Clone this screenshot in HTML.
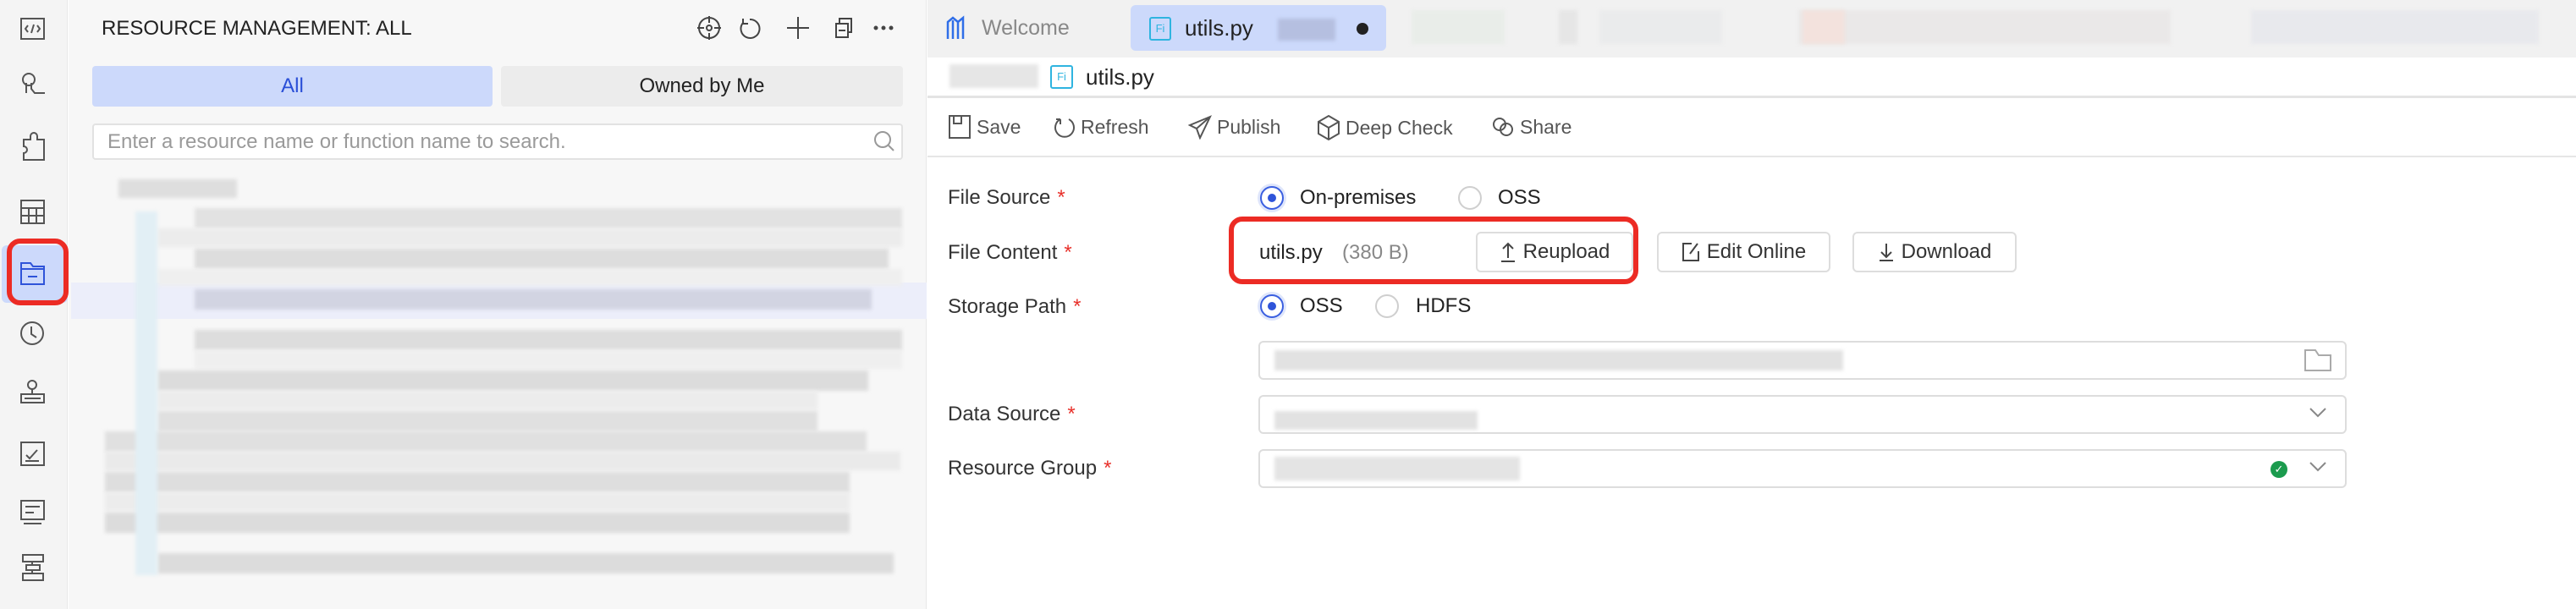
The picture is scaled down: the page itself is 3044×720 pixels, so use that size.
<!DOCTYPE html>
<html><head><meta charset="utf-8"><style>
*{margin:0;padding:0;box-sizing:border-box}
body{width:3044px;height:720px;overflow:hidden;background:#fff;font-family:"Liberation Sans",Arial,sans-serif;position:relative;color:#333}
.a{position:absolute}
.bl{position:absolute;background:#e4e4e4;filter:blur(2px)}
.lbl{position:absolute;left:1120px;font-size:24px;color:#333;line-height:30px}
.lbl b{color:#e8302a;font-weight:normal;margin-left:8px}
.radio{position:absolute;width:28px;height:28px;border-radius:50%;border:2px solid #cfcfcf;background:#fff}
.radio.on{border-color:#3a5fe0;box-shadow:0 0 0 3px #dfe6fb}
.radio.on::after{content:"";position:absolute;left:7px;top:7px;width:10px;height:10px;border-radius:50%;background:#2f54d9}
.rt{position:absolute;font-size:24px;color:#222;line-height:30px}
.btn{position:absolute;top:274px;height:48px;border:2px solid #ddd;border-radius:6px;font-size:24px;color:#333;display:flex;align-items:center;justify-content:center;gap:8px;background:#fff}
.inp{position:absolute;left:1487px;width:1286px;height:46px;border:2px solid #ddd;border-radius:6px;background:#fff}
.tb{position:absolute;top:135px;font-size:23px;color:#555;line-height:30px;display:flex;align-items:center;gap:6px}
svg{display:block}
</style></head><body>
<div class="a" style="left:0;top:0;width:80px;height:720px;background:#f4f4f4;border-right:1px solid #e8e8e8"></div>
<div class="a" style="left:2px;top:290px;width:78px;height:68px;background:#ccd9fb;border-radius:6px"></div>
<div class="a" style="left:8px;top:282px;width:73px;height:79px;border:6px solid #ec2b24;border-radius:16px"></div>
<svg class="a" style="left:0;top:0" width="80" height="720" fill="none" stroke="#555" stroke-width="2">
<rect x="25" y="22" width="27" height="24"/><path d="M33 30l-3 4 3 4M44 30l3 4-3 4M40 29l-3 10"/>
<circle cx="34" cy="94" r="7"/><path d="M31 98v12M37 98v7l4 5h12"/>
<path d="M28 165h8v-4a4 4 0 0 1 8 0v4h8v24H28v-8a4 4 0 0 0 0-8z"/>
<rect x="25" y="237" width="27" height="27"/><path d="M25 246h27M25 255h27M34 246v18M43 246v18"/>
<path d="M25 311h11l3 4h13v21H25z M25 318h27 M33 327h11" stroke="#2f54d9"/>
<circle cx="38" cy="394" r="13"/><path d="M37 386v9l6 4"/>
<circle cx="38" cy="455" r="5"/><path d="M38 460v6M25 466h27v10H25z M29 471h19"/>
<rect x="25" y="523" width="27" height="27"/><path d="M31 538l4 4 9-10M30 545h16"/>
<rect x="25" y="592" width="27" height="22"/><path d="M30 599h17M30 606h10M28 619h21"/>
<rect x="27" y="656" width="24" height="8"/><rect x="31" y="668" width="16" height="6"/><rect x="27" y="678" width="24" height="8"/><path d="M38 664v4M38 674v4"/>
</svg>
<div class="a" style="left:81px;top:0;width:1014px;height:720px;background:#f7f7f7;border-right:1px solid #e8e8e8"></div>
<div class="a" style="left:120px;top:20px;font-size:24px;color:#222;line-height:28px">RESOURCE MANAGEMENT: ALL</div>
<svg class="a" style="left:820px;top:14px" width="250" height="40" fill="none" stroke="#444" stroke-width="2">
<circle cx="18" cy="19" r="12"/><circle cx="18" cy="19" r="3"/><path d="M18 5v8M18 25v8M4 19h8M24 19h8"/>
<path d="M66 9a11 11 0 1 1-8 4M58 8v6h6"/>
<path d="M123 6v26M110 19h26"/>
<rect x="168" y="14" width="14" height="16"/><path d="M172 14v-6h14v16h-4M171 22h8"/>
<circle cx="215" cy="19" r="1.5" fill="#444"/><circle cx="224" cy="19" r="1.5" fill="#444"/><circle cx="233" cy="19" r="1.5" fill="#444"/>
</svg>
<div class="a" style="left:109px;top:78px;width:473px;height:48px;background:#ccd9fb;border-radius:4px;color:#2a4fd7;font-size:24px;line-height:48px;text-align:center">All</div>
<div class="a" style="left:592px;top:78px;width:475px;height:48px;background:#ececec;border-radius:4px;color:#222;font-size:24px;line-height:48px;text-align:center">Owned by Me</div>
<div class="a" style="left:109px;top:146px;width:958px;height:43px;background:#fff;border:2px solid #e2e2e2;border-radius:4px;font-size:24px;color:#9a9a9a;line-height:39px;padding-left:16px">Enter a resource name or function name to search.</div>
<svg class="a" style="left:1030px;top:152px" width="30" height="30" fill="none" stroke="#999" stroke-width="2"><circle cx="13" cy="13" r="9"/><path d="M20 20l6 6"/></svg>
<div class="a" style="left:84px;top:334px;width:1011px;height:43px;background:#eceefa"></div>
<div class="bl" style="left:140px;top:212px;width:140px;height:22px;background:#dedede"></div>
<div class="bl" style="left:230px;top:246px;width:836px;height:24px;background:#e2e2e2"></div>
<div class="bl" style="left:186px;top:270px;width:880px;height:22px;background:#ececec"></div>
<div class="bl" style="left:230px;top:294px;width:820px;height:24px;background:#dddddd"></div>
<div class="bl" style="left:186px;top:318px;width:880px;height:20px;background:#efefef"></div>
<div class="bl" style="left:230px;top:342px;width:800px;height:24px;background:#d2d4e2"></div>
<div class="bl" style="left:230px;top:390px;width:836px;height:24px;background:#dddddd"></div>
<div class="bl" style="left:230px;top:414px;width:836px;height:22px;background:#efefef"></div>
<div class="bl" style="left:186px;top:438px;width:840px;height:24px;background:#dcdcdc"></div>
<div class="bl" style="left:186px;top:462px;width:780px;height:22px;background:#ececec"></div>
<div class="bl" style="left:186px;top:486px;width:780px;height:24px;background:#e0e0e0"></div>
<div class="bl" style="left:124px;top:510px;width:900px;height:24px;background:#e0e0e0"></div>
<div class="bl" style="left:124px;top:534px;width:940px;height:22px;background:#eaeaea"></div>
<div class="bl" style="left:124px;top:558px;width:880px;height:24px;background:#dedede"></div>
<div class="bl" style="left:124px;top:582px;width:880px;height:22px;background:#ececec"></div>
<div class="bl" style="left:124px;top:606px;width:880px;height:24px;background:#dcdcdc"></div>
<div class="bl" style="left:186px;top:654px;width:870px;height:24px;background:#dcdcdc"></div>
<div class="a" style="left:160px;top:250px;width:26px;height:430px;background:#e2eff5;filter:blur(2px)"></div>
<div class="a" style="left:1096px;top:0;width:1948px;height:68px;background:#f1f1f1"></div>
<svg class="a" style="left:1116px;top:18px" width="28" height="30" fill="none" stroke="#2f6ee8" stroke-width="2.5"><path d="M4 28V8l6-5 6 5 6-5v25M10 6v22M16 8v20M22 6v18"/></svg>
<div class="a" style="left:1160px;top:18px;font-size:25px;color:#888;line-height:30px">Welcome</div>
<div class="a" style="left:1336px;top:6px;width:302px;height:54px;background:#ccd9fb;border-radius:6px"></div>
<div class="a" style="left:1358px;top:20px;width:26px;height:28px;border:2px solid #2fb4e0;border-radius:3px;font-size:13px;color:#2fb4e0;text-align:center;line-height:24px">Fi</div>
<div class="a" style="left:1400px;top:17px;font-size:26px;color:#222;line-height:32px">utils.py</div>
<div class="bl" style="left:1510px;top:22px;width:68px;height:26px;background:#b5bfe0"></div>
<div class="a" style="left:1603px;top:27px;width:14px;height:14px;border-radius:50%;background:#222"></div>
<div class="bl" style="left:1668px;top:12px;width:110px;height:40px;background:#e9ede9"></div>
<div class="bl" style="left:1842px;top:12px;width:22px;height:40px;background:#e6e6e6"></div>
<div class="bl" style="left:1890px;top:12px;width:145px;height:40px;background:#eaebec"></div>
<div class="bl" style="left:2125px;top:12px;width:440px;height:40px;background:#eae8e8"></div>
<div class="bl" style="left:2130px;top:12px;width:50px;height:40px;background:#f3e2dd"></div>
<div class="bl" style="left:2660px;top:12px;width:340px;height:40px;background:#e8e9ed"></div>
<div class="bl" style="left:1122px;top:76px;width:105px;height:28px;background:#e6e6e6"></div>
<div class="a" style="left:1241px;top:77px;width:27px;height:28px;border:2px solid #2fb4e0;border-radius:3px;font-size:13px;color:#2fb4e0;text-align:center;line-height:24px">Fi</div>
<div class="a" style="left:1283px;top:75px;font-size:26px;color:#222;line-height:32px">utils.py</div>
<div class="a" style="left:1096px;top:113px;width:1948px;height:3px;background:#e4e4e4"></div>
<div class="tb" style="left:1120px"><svg width="28" height="30" fill="none" stroke="#555" stroke-width="2"><path d="M2 2h24v26H2z M7 2v9h9V2" /></svg>Save</div>
<div class="tb" style="left:1245px"><svg width="26" height="30" fill="none" stroke="#555" stroke-width="2"><path d="M8 6a11 11 0 1 0 10 0M8 6v6M8 6H3"/></svg>Refresh</div>
<div class="tb" style="left:1404px"><svg width="28" height="30" fill="none" stroke="#555" stroke-width="2"><path d="M26 3L2 13l8 4 4 11zM10 17L26 3"/></svg>Publish</div>
<div class="tb" style="left:1556px"><svg width="28" height="32" fill="none" stroke="#555" stroke-width="2"><path d="M14 2l12 7v14l-12 7-12-7V9zM2 9l12 7 12-7M14 16v14"/></svg>Deep Check</div>
<div class="tb" style="left:1762px"><svg width="28" height="30" fill="none" stroke="#555" stroke-width="2"><circle cx="10" cy="12" r="7"/><circle cx="18" cy="18" r="7"/></svg>Share</div>
<div class="a" style="left:1096px;top:184px;width:1948px;height:2px;background:#e6e6e6"></div>
<div class="lbl" style="top:219px">File Source<b>*</b></div>
<div class="lbl" style="top:284px">File Content<b>*</b></div>
<div class="lbl" style="top:348px">Storage Path<b>*</b></div>
<div class="lbl" style="top:475px">Data Source<b>*</b></div>
<div class="lbl" style="top:539px">Resource Group<b>*</b></div>
<div class="radio on" style="left:1489px;top:220px"></div><div class="rt" style="left:1536px;top:219px">On-premises</div>
<div class="radio" style="left:1723px;top:220px"></div><div class="rt" style="left:1770px;top:219px">OSS</div>
<div class="radio on" style="left:1489px;top:348px"></div><div class="rt" style="left:1536px;top:347px">OSS</div>
<div class="radio" style="left:1625px;top:348px"></div><div class="rt" style="left:1673px;top:347px">HDFS</div>
<div class="rt" style="left:1488px;top:284px">utils.py</div>
<div class="rt" style="left:1586px;top:284px;color:#888">(380 B)</div>
<div class="btn" style="left:1744px;width:186px"><svg width="20" height="26" fill="none" stroke="#444" stroke-width="2"><path d="M10 20V3M4 9l6-6 6 6M2 24h16"/></svg>Reupload</div>
<div class="btn" style="left:1958px;width:205px"><svg width="22" height="24" fill="none" stroke="#444" stroke-width="2"><path d="M12 2H2v20h18V11M10 14l9-12"/></svg>Edit Online</div>
<div class="btn" style="left:2189px;width:194px"><svg width="20" height="24" fill="none" stroke="#444" stroke-width="2"><path d="M10 2v16M4 12l6 6 6-6M2 22h16"/></svg>Download</div>
<div class="a" style="left:1452px;top:256px;width:484px;height:80px;border:6px solid #ec2b24;border-radius:16px"></div>
<div class="inp" style="top:403px"></div>
<div class="bl" style="left:1506px;top:414px;width:672px;height:24px;background:#e2e2e2"></div>
<svg class="a" style="left:2722px;top:412px" width="34" height="28" fill="none" stroke="#aaa" stroke-width="2"><path d="M2 2h12l4 6h14v18H2z"/></svg>
<div class="inp" style="top:467px"></div>
<div class="bl" style="left:1506px;top:486px;width:240px;height:22px;background:#e2e2e2"></div>
<svg class="a" style="left:2728px;top:480px" width="22" height="16" fill="none" stroke="#888" stroke-width="2"><path d="M2 3l9 9 9-9"/></svg>
<div class="inp" style="top:531px"></div>
<div class="bl" style="left:1506px;top:540px;width:290px;height:28px;background:#e4e4e4"></div>
<div class="a" style="left:2683px;top:545px;width:20px;height:20px;border-radius:50%;background:#1b9b4e;color:#fff;font-size:13px;text-align:center;line-height:20px">✓</div>
<svg class="a" style="left:2728px;top:544px" width="22" height="16" fill="none" stroke="#888" stroke-width="2"><path d="M2 3l9 9 9-9"/></svg>
</body></html>
